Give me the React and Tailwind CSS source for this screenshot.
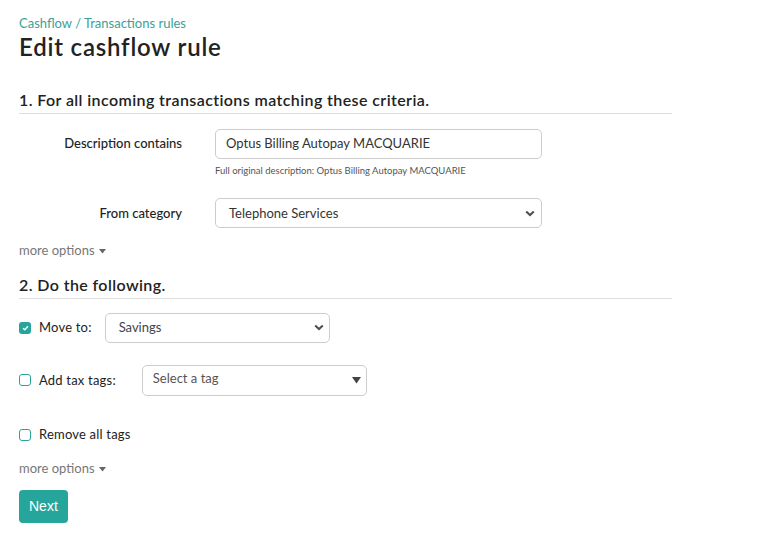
import React from "react";

function Chevron() {
  return (
    <svg width="10" height="7" viewBox="0 0 10 7" className="text-[#4a4f55]">
      <path d="M1.2 1.4 L5 5 L8.8 1.4" fill="none" stroke="currentColor" strokeWidth="2" />
    </svg>
  );
}

function Check({ checked, label }) {
  return (
    <div className="flex items-center gap-2">
      {checked ? (
        <span className="flex h-[12px] w-[12px] items-center justify-center rounded-[3px] bg-[#26a69a]">
          <svg width="7" height="6" viewBox="0 0 7 6">
            <path d="M1 3.2 L2.8 4.8 L6 1.2" fill="none" stroke="white" strokeWidth="1.4" />
          </svg>
        </span>
      ) : (
        <span className="h-[12px] w-[12px] rounded-[3px] border border-[#26a69a] bg-white" />
      )}
      <span className="text-[13px] tracking-[0.2px] text-[#222]">{label}</span>
    </div>
  );
}

function MoreOptions() {
  return (
    <div className="flex items-center gap-1 text-[13px] text-[#777]">
      more options
      <svg width="7" height="5" viewBox="0 0 7 5">
        <path d="M0 0 L7 0 L3.5 4.5 Z" fill="#666" />
      </svg>
    </div>
  );
}

export default function App() {
  return (
    <div className="min-h-[538px] bg-white px-[19px] pt-[15px] font-['Lato','Liberation_Sans',sans-serif] text-[#222]">
      <div className="text-[13px] leading-[16px] text-[#3a9f9a]">Cashflow / Transactions rules</div>
      <h1 className="text-[24px] font-semibold leading-[32px] tracking-[0.8px]">Edit cashflow rule</h1>

      <div className="mt-[27px] w-[653px] border-b border-[#ddd] pb-[3px] text-[16px] font-semibold leading-[20px] tracking-[0.4px]">
        1. For all incoming transactions matching these criteria.
      </div>

      <div className="mt-[15px] flex items-start">
        <div className="w-[163px] pt-[5px] text-right text-[13px] font-medium">Description contains</div>
        <div className="ml-[33px]">
          <div className="flex h-[30px] w-[327px] items-center rounded-[5px] border border-[#ccc] px-[10px] text-[13px] text-[#333]">
            Optus Billing Autopay MACQUARIE
          </div>
          <div className="mt-[5px] text-[9.5px] text-[#555]">Full original description: Optus Billing Autopay MACQUARIE</div>
        </div>
      </div>

      <div className="mt-[20px] flex items-start">
        <div className="w-[163px] pt-[6px] text-right text-[13px] font-medium">From category</div>
        <div className="ml-[33px] flex h-[30px] w-[327px] items-center justify-between rounded-[5px] border border-[#ccc] pl-[13px] pr-[6px] text-[13px] text-[#333]">
          Telephone Services
          <Chevron />
        </div>
      </div>

      <div className="mt-[13px]">
        <MoreOptions />
      </div>

      <div className="mt-[14px] w-[653px] border-b border-[#ddd] pb-[3px] text-[16px] font-semibold leading-[20px] tracking-[0.4px]">
        2. Do the following.
      </div>

      <div className="mt-[14px] flex items-center">
        <Check checked label="Move to:" />
        <div className="ml-[13px] flex h-[30px] w-[225px] items-center justify-between rounded-[5px] border border-[#ccc] pl-[13px] pr-[5px] text-[13px] text-[#444]">
          Savings
          <Chevron />
        </div>
      </div>

      <div className="mt-[22px] flex items-center">
        <Check label="Add tax tags:" />
        <div className="ml-[26px] flex h-[31px] w-[225px] items-center justify-between rounded-[5px] border border-[#ccc] pl-[10px] pr-[5px] text-[13px] text-[#555]">
          <span className="-mt-[3px]">Select a tag</span>
          <svg width="9" height="8" viewBox="0 0 9 8">
            <path d="M0 1 L9 1 L4.5 7.5 Z" fill="#444" />
          </svg>
        </div>
      </div>

      <div className="mt-[29px]">
        <Check label="Remove all tags" />
      </div>

      <div className="mt-[15px]">
        <MoreOptions />
      </div>

      <button className="mt-[11px] h-[33px] rounded-[4px] bg-[#26a69a] px-[10px] font-['Liberation_Sans',sans-serif] text-[14px] text-white">
        Next
      </button>
    </div>
  );
}
